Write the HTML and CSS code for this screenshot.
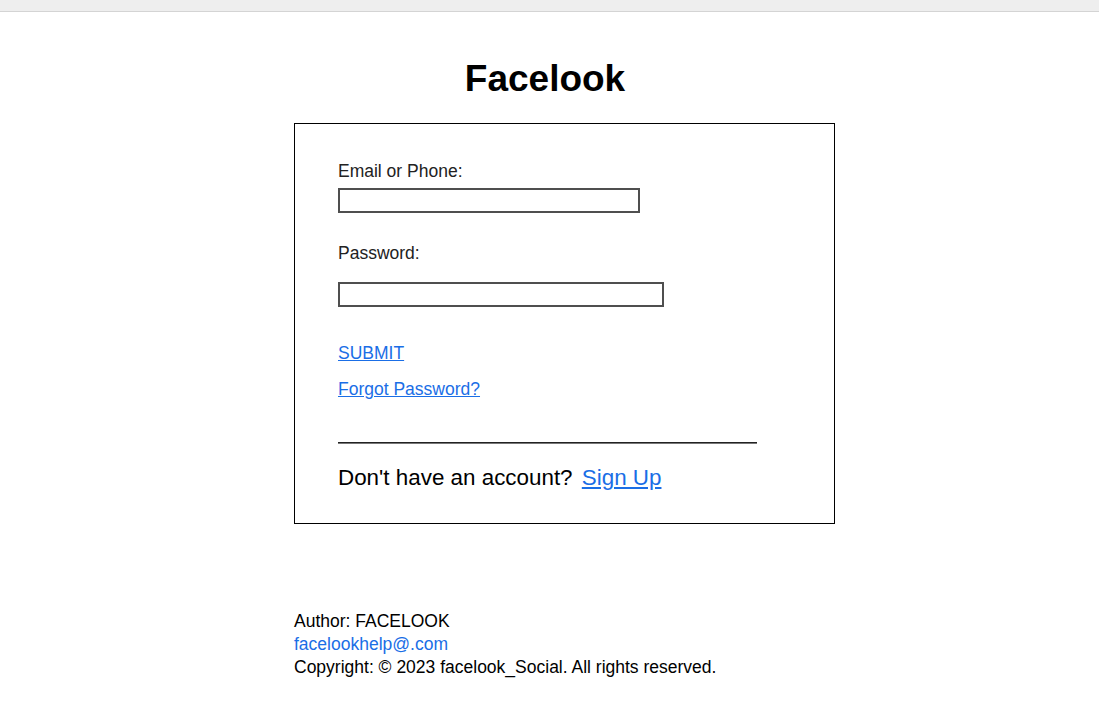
FILE: index.html
```html
<!DOCTYPE html>
<html lang="en">
<head>
<meta charset="utf-8">
<title>Facelook</title>
<link rel="stylesheet" href="styles.css">
</head>
<body>
<div class="topbar"></div>
<h1 class="title">Facelook</h1>
<main class="page">
  <form class="login-box">
    <label class="field-label" for="email">Email or Phone:</label>
    <input class="field-input email-input" id="email" type="text">
    <label class="field-label password-label" for="password">Password:</label>
    <input class="field-input password-input" id="password" type="password">
    <a class="link submit-link" href="#">SUBMIT</a>
    <a class="link forgot-link" href="#">Forgot Password?</a>
    <hr class="divider">
    <p class="signup-line">Don't have an account? <a class="link signup-link" href="#">Sign Up</a></p>
  </form>
  <footer class="footer">
    <div class="footer-line">Author: FACELOOK</div>
    <div class="footer-line"><a class="footer-mail" href="#">facelookhelp@.com</a></div>
    <div class="footer-line">Copyright: © 2023 facelook_Social. All rights reserved.</div>
  </footer>
</main>
</body>
</html>
```

FILE: styles.css
```css
html, body {
  margin: 0;
  padding: 0;
  background: #ffffff;
}

body {
  font-family: "Liberation Sans", Arial, sans-serif;
  color: #000;
}

.topbar {
  height: 11px;
  background: #eeeeee;
  border-bottom: 1px solid #d4d4d4;
}

.title {
  margin: 45px 0 22px 0;
  padding-right: 9px;
  font-size: 37px;
  line-height: 44px;
  font-weight: bold;
  text-align: center;
}

.page {
  margin-left: 294px;
  width: 541px;
}

.login-box {
  box-sizing: border-box;
  width: 541px;
  border: 1px solid #000;
  padding: 37px 43px 32px 43px;
  display: flex;
  flex-direction: column;
  align-items: flex-start;
}

.field-label {
  font-size: 17.5px;
  line-height: 20px;
  color: #222;
}

.field-input {
  box-sizing: border-box;
  height: 25px;
  margin: 0;
  padding: 1px 2px;
  border: 2px solid #4f4f4f;
  background: #fff;
  font-size: 14px;
}

.email-input {
  width: 302px;
  margin-top: 7px;
}

.password-label {
  margin-top: 30px;
}

.password-input {
  width: 326px;
  margin-top: 19px;
}

.link {
  color: #1a6ee6;
  text-decoration: underline;
}

.submit-link,
.forgot-link {
  font-size: 17.5px;
  line-height: 20px;
}

.submit-link {
  margin-top: 36px;
}

.forgot-link {
  margin-top: 16px;
}

.divider {
  width: 419px;
  height: 0;
  margin: 43px 0 0 0;
  border: 0;
  border-top: 1px solid #222;
  border-bottom: 1px solid #777;
}

.signup-line {
  margin: 21px 0 0 0;
  font-size: 22.4px;
  line-height: 26px;
  color: #000;
}

.signup-link {
  margin-left: 3px;
}

.footer {
  margin-top: 86px;
  font-size: 17.5px;
  line-height: 23px;
  color: #000;
}

.footer-mail {
  color: #1a6ee6;
  text-decoration: none;
}
```
